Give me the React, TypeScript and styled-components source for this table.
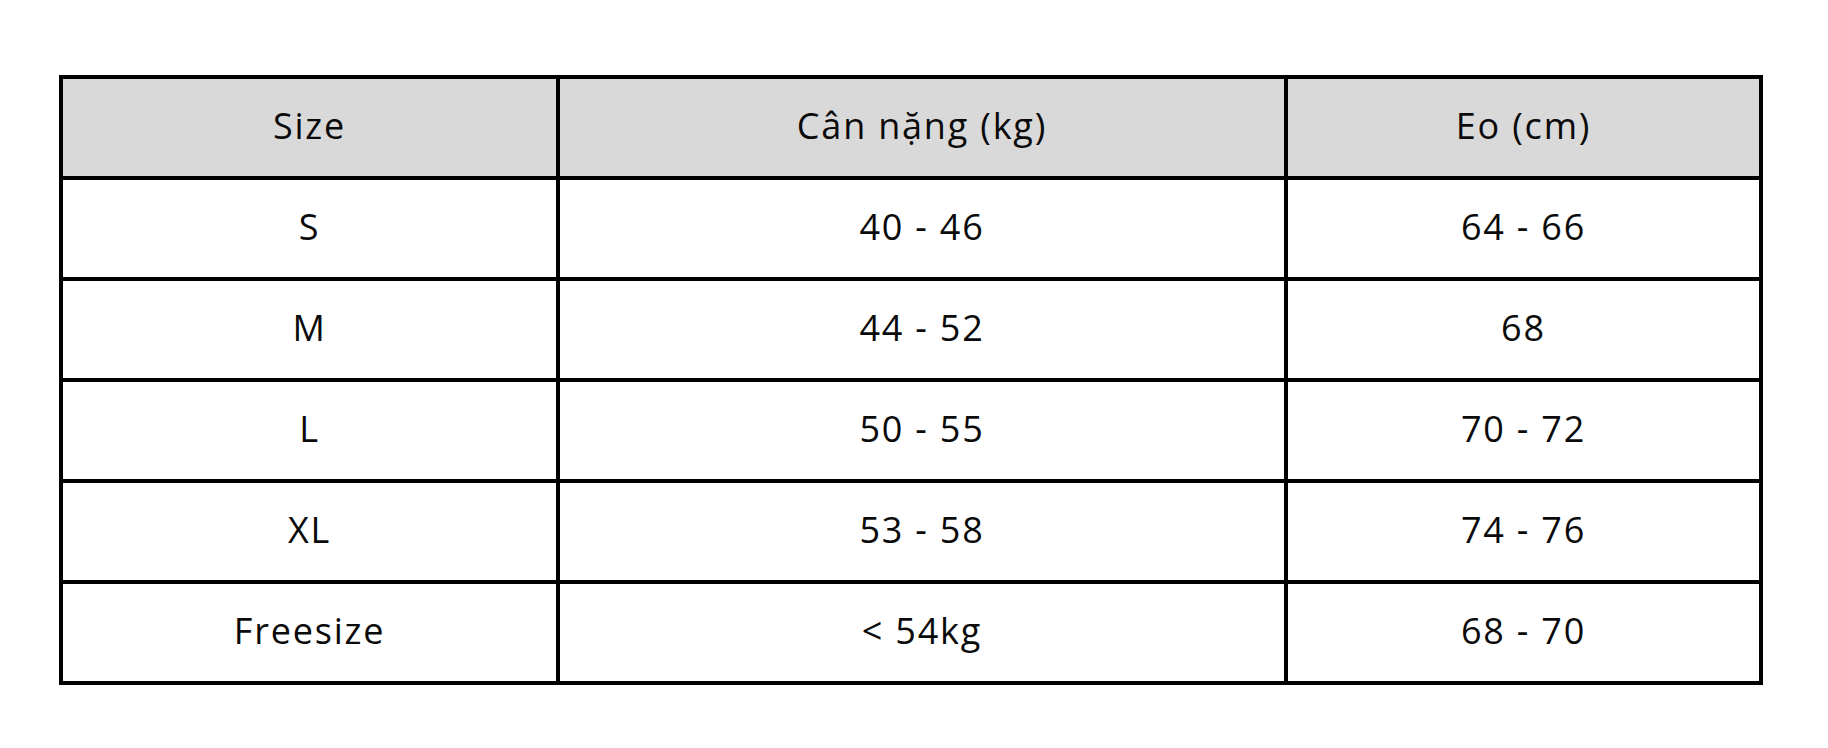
import React from "react";
import styled, { createGlobalStyle } from "styled-components";

const GlobalStyle = createGlobalStyle`
  html, body {
    margin: 0;
    padding: 0;
    background: #ffffff;
  }
  body {
    font-family: "Open Sans", "Noto Sans", sans-serif;
    color: #000000;
  }
`;

const Page = styled.div`
  width: 1828px;
  height: 748px;
  padding: 75px 0 0 59px;
  box-sizing: border-box;
  background: #ffffff;
`;

const Table = styled.div`
  display: grid;
  grid-template-columns: 493px 724px 471px;
  grid-auto-rows: 97px;
  gap: 4px;
  width: 1704px;
  padding: 4px;
  box-sizing: border-box;
  background: #000000;
`;

const Cell = styled.div<{ $head?: boolean }>`
  display: flex;
  align-items: center;
  justify-content: center;
  padding-bottom: 5px;
  box-sizing: border-box;
  background: ${(p) => (p.$head ? "#d9d9d9" : "#ffffff")};
  font-size: 36px;
  letter-spacing: 1.8px;
  color: #0a0a0a;
`;

const headers = ["Size", "Cân nặng (kg)", "Eo (cm)"];

const rows: string[][] = [
  ["S", "40 - 46", "64 - 66"],
  ["M", "44 - 52", "68"],
  ["L", "50 - 55", "70 - 72"],
  ["XL", "53 - 58", "74 - 76"],
  ["Freesize", "< 54kg", "68 - 70"],
];

const App: React.FC = () => {
  return (
    <>
      <GlobalStyle />
      <Page>
        <Table>
          {headers.map((h) => (
            <Cell $head key={h}>{h}</Cell>
          ))}
          {rows.map((r, i) =>
            r.map((v, j) => <Cell key={`${i}-${j}`}>{v}</Cell>)
          )}
        </Table>
      </Page>
    </>
  );
};

export default App;
